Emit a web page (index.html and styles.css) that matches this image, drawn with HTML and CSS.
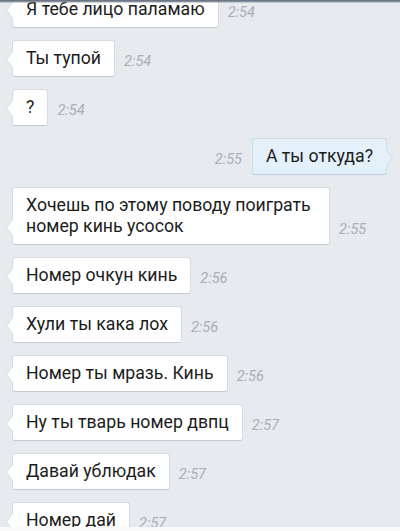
FILE: index.html
```html
<!DOCTYPE html>
<html lang="ru">
<head>
    <meta charset="UTF-8">
    <meta name="viewport" content="width=device-width, initial-scale=1.0">
    <title>Чат</title>
    <link rel="stylesheet" href="styles.css">
</head>
<body>
    <div class="top-edge"></div>
    <div class="chat">
        <div class="row"><div class="bubble">Я тебе лицо паламаю</div><span class="time">2:54</span></div>
        <div class="row"><div class="bubble">Ты тупой</div><span class="time">2:54</span></div>
        <div class="row"><div class="bubble">?</div><span class="time">2:54</span></div>
        <div class="row out"><span class="time">2:55</span><div class="bubble">А ты откуда?</div></div>
        <div class="row"><div class="bubble">Хочешь по этому поводу поиграть номер кинь усосок</div><span class="time">2:55</span></div>
        <div class="row"><div class="bubble">Номер очкун кинь</div><span class="time">2:56</span></div>
        <div class="row"><div class="bubble">Хули ты кака лох</div><span class="time">2:56</span></div>
        <div class="row"><div class="bubble">Номер ты мразь. Кинь</div><span class="time">2:56</span></div>
        <div class="row"><div class="bubble">Ну ты тварь номер двпц</div><span class="time">2:57</span></div>
        <div class="row"><div class="bubble">Давай ублюдак</div><span class="time">2:57</span></div>
        <div class="row"><div class="bubble">Номер дай</div><span class="time">2:57</span></div>
    </div>
    <div class="bottom-edge"></div>
</body>
</html>
```

FILE: styles.css
```css
body {
    margin: 0;
    height: 531px;
    overflow: hidden;
    background-color: #e7eaee;
    font-family: Roboto, "Noto Sans", sans-serif;
}
.top-edge {
    position: fixed;
    top: 0;
    left: 0;
    right: 0;
    height: 3px;
    background: linear-gradient(#5f6a78, #8c95a0 60%, rgba(140, 149, 160, 0));
    z-index: 2;
}
.bottom-edge {
    position: fixed;
    bottom: 0;
    left: 0;
    right: 0;
    height: 4px;
    background: #fafafa;
    z-index: 2;
}
.chat {
    display: flex;
    flex-direction: column;
    gap: 12px;
    margin-top: -9px;
    padding: 0 13px 0 12px;
}
.row {
    display: flex;
    align-items: flex-end;
    gap: 9px;
}
.row.out {
    justify-content: flex-end;
    gap: 10px;
}
.bubble {
    position: relative;
    box-sizing: border-box;
    max-width: 318px;
    padding: 7px 13px;
    font-size: 17.7px;
    line-height: 21px;
    color: #1c1c1c;
    background: #fff;
    border: 1px solid #d6dbe0;
    border-bottom-color: #c4cad1;
    border-radius: 3px;
}
.bubble::before {
    content: "";
    position: absolute;
    left: -6px;
    bottom: 11px;
    width: 10px;
    height: 10px;
    background: inherit;
    border-left: 1px solid #d6dbe0;
    border-bottom: 1px solid #d6dbe0;
    transform: rotate(45deg) skew(8deg, 8deg);
}
.out .bubble {
    background: #e4f1fb;
    border-color: #cfdbe5;
    border-bottom-color: #bfcad4;
}
.out .bubble::before {
    left: auto;
    right: -6px;
    border-left: none;
    border-bottom: none;
    border-right: 1px solid #cfdbe5;
    border-top: 1px solid #cfdbe5;
}
.time {
    padding-bottom: 7px;
    font-size: 14.5px;
    line-height: 17px;
    font-style: italic;
    color: #a8afb7;
}
```
